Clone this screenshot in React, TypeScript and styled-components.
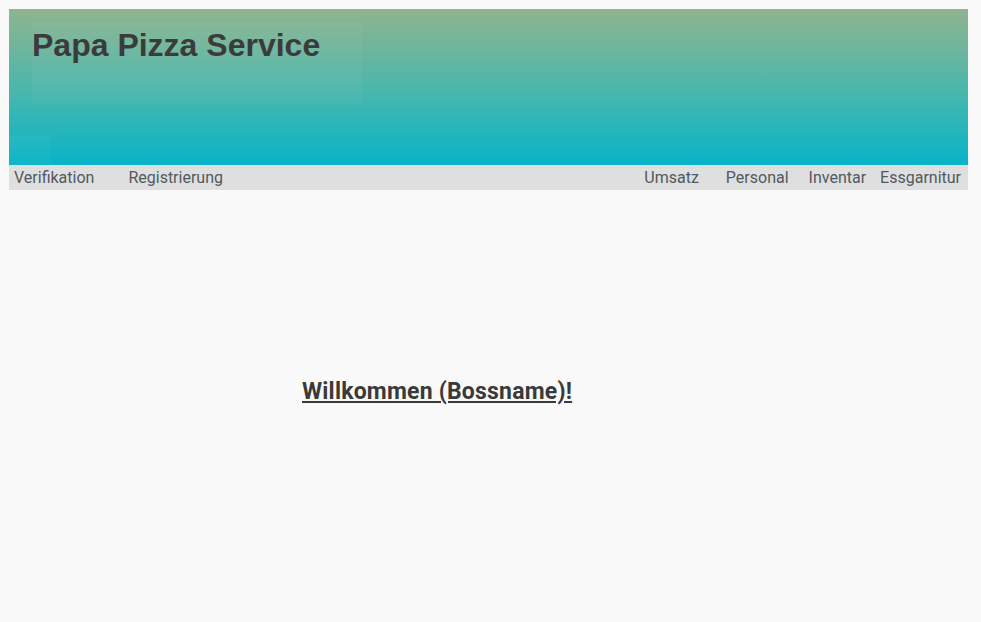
import styled, { createGlobalStyle } from "styled-components";

const GlobalStyle = createGlobalStyle`
  body {
    margin: 0;
    background: #f9f9f9;
    font-family: Roboto, "Liberation Sans", sans-serif;
  }
`;

const Page = styled.div`
  width: 959px;
  padding: 9px;
`;

const Header = styled.header`
  height: 156px;
  background: linear-gradient(to bottom, #8fb48f 0%, #4db7ab 50%, #07b4c8 100%);
  padding: 13px 0 0 23px;
  box-sizing: border-box;
  position: relative;
`;

const TitleBox = styled.div`
  width: 330px;
  height: 83px;
  background: rgba(255, 255, 255, 0.035);
`;

const Corner = styled.div`
  position: absolute;
  left: 0;
  bottom: 0;
  width: 42px;
  height: 30px;
  background: rgba(255, 255, 255, 0.03);
`;

const Title = styled.h1`
  margin: 0;
  padding-top: 5px;
  font-family: "Liberation Sans", Arial, sans-serif;
  font-size: 32px;
  font-weight: bold;
  color: #3b3b3b;
`;

const Nav = styled.nav`
  display: flex;
  align-items: center;
  height: 25px;
  background: #dfdfdf;
  padding: 0 7px 0 5px;
  font-size: 16px;
  color: #505a60;
`;

const NavItem = styled.a<{ $gap?: number }>`
  margin-left: ${(p) => p.$gap ?? 0}px;
  cursor: pointer;
  white-space: nowrap;
`;

const Spacer = styled.div`
  flex: 1;
`;

const Main = styled.main`
  padding: 188px 0 0 293px;
`;

const Welcome = styled.h2`
  margin: 0;
  font-size: 23px;
  font-weight: bold;
  color: #3a3a3a;
  letter-spacing: 0.2px;
  text-decoration: underline;
  text-decoration-thickness: 2px;
  text-underline-offset: 2px;
`;

export default function App() {
  return (
    <>
      <GlobalStyle />
      <Page>
        <Header>
          <TitleBox>
            <Title>Papa Pizza Service</Title>
          </TitleBox>
          <Corner />
        </Header>
        <Nav>
          <NavItem>Verifikation</NavItem>
          <NavItem $gap={34}>Registrierung</NavItem>
          <Spacer />
          <NavItem>Umsatz</NavItem>
          <NavItem $gap={27}>Personal</NavItem>
          <NavItem $gap={20}>Inventar</NavItem>
          <NavItem $gap={14}>Essgarnitur</NavItem>
        </Nav>
        <Main>
          <Welcome>Willkommen (Bossname)!</Welcome>
        </Main>
      </Page>
    </>
  );
}
